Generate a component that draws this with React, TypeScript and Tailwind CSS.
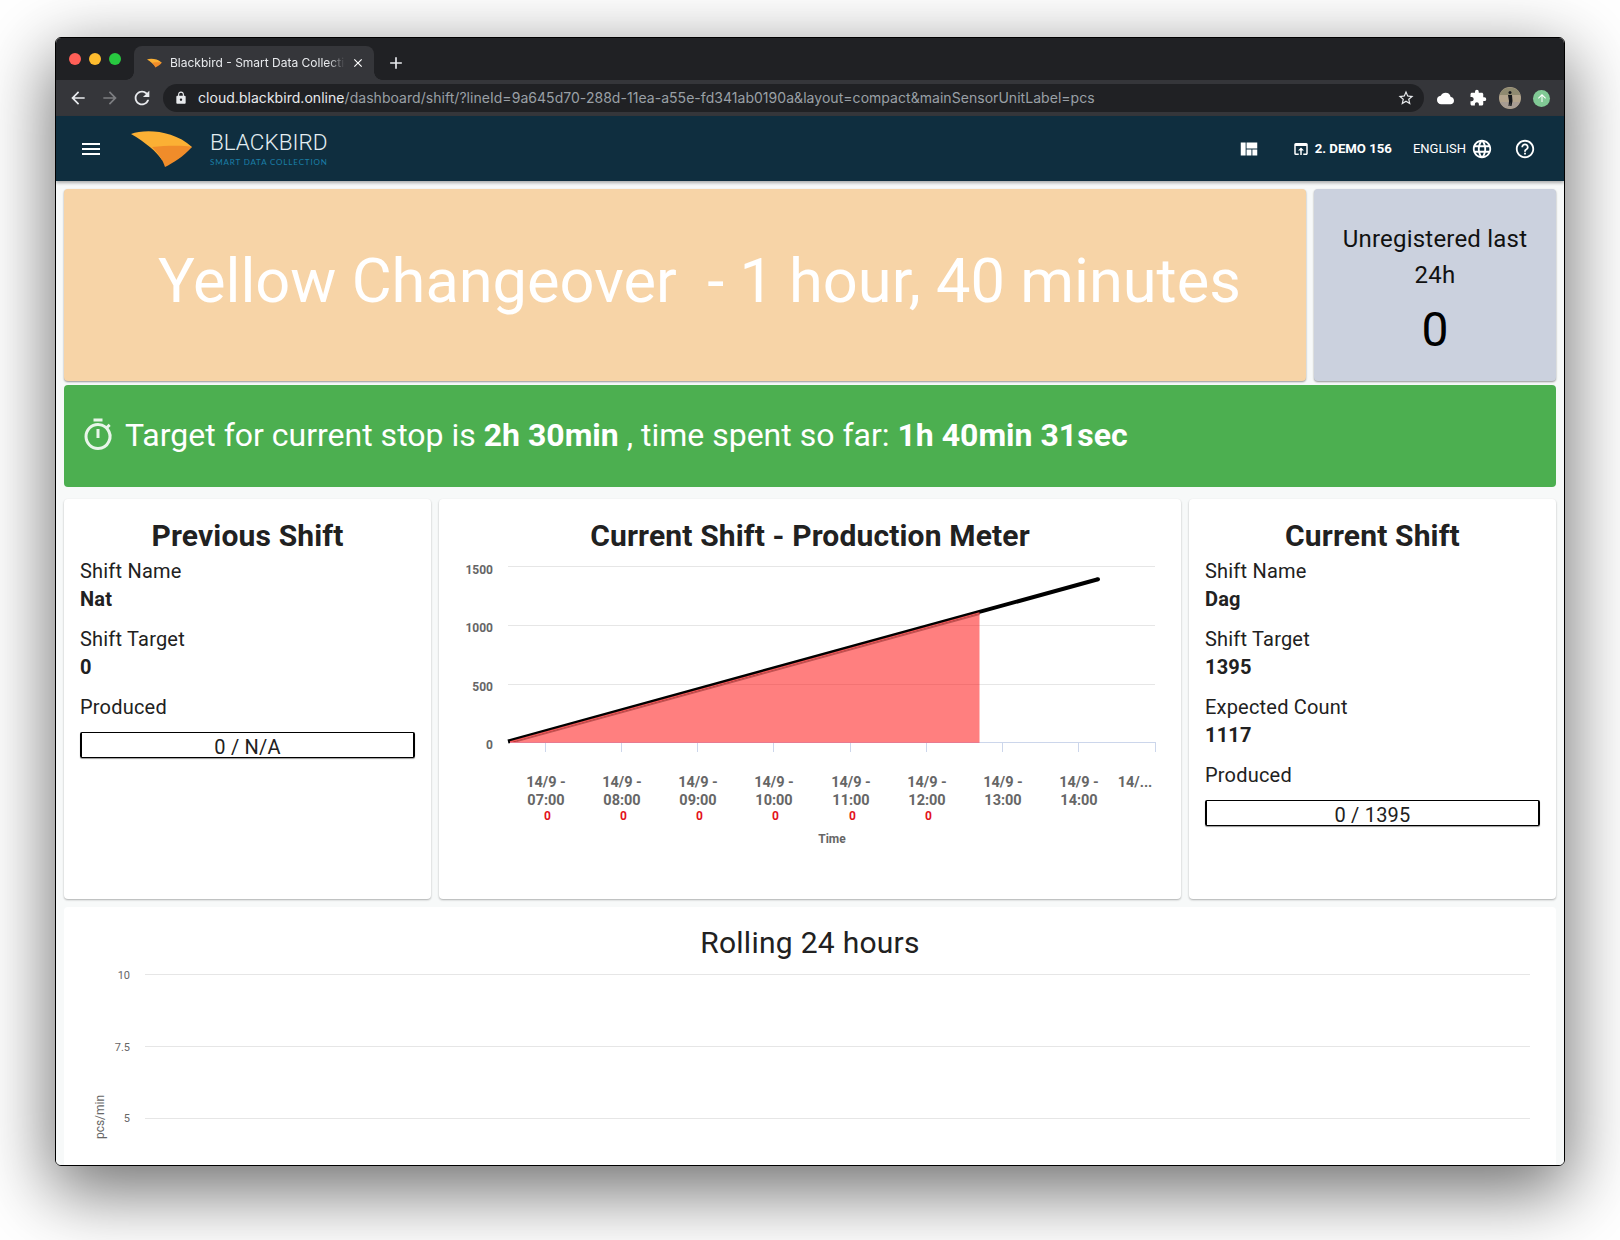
import React from 'react';
import {
  MdArrowBack, MdArrowForward, MdRefresh, MdLock, MdStarBorder, MdExtension, MdCloud, MdMenu,
  MdViewQuilt, MdOpenInBrowser, MdLanguage, MdHelpOutline, MdOutlineTimer, MdClose, MdAdd, MdArrowUpward,
} from 'react-icons/md';

const hours = ['07:00', '08:00', '09:00', '10:00', '11:00', '12:00', '13:00', '14:00'];
const ticks = [545, 621, 697, 773, 850, 926, 1002, 1078, 1155];

const BirdLogo = ({ className }: { className: string }) => (
  <svg viewBox="0 0 62 37" className={className}>
    <path d="M0 4 C14 -1 42 0 61 17 L31 30 C26 22 14 12 0 4Z" fill="#fbb034" />
    <path d="M21 17 C34 16 50 15 61 17 C52 27 42 33 34 37 C32 30 27 23 21 17Z" fill="#f08c2a" />
  </svg>
);

const ProgressBar = ({ label }: { label: string }) => (
  <div className="mt-[11px] flex h-[26px] items-center justify-center rounded-[2px] border border-x-2 border-black pt-[4px] text-[20px] leading-none tracking-[0.2px] text-[#212121] shadow-[0_1px_1px_rgba(0,0,0,0.4)]">
    {label}
  </div>
);

const Stat = ({ label, value }: { label: string; value: string }) => (
  <div className="mb-3 text-[20px] leading-[28px] tracking-[0.2px] text-[#212121]">
    <div>{label}</div>
    <div className="font-bold">{value}</div>
  </div>
);

const ShiftCard = ({ title, stats, bar, className }: { title: string; stats: string[][]; bar: string; className: string }) => (
  <div className={`rounded-[4px] bg-white px-4 pt-[19px] shadow-[0_1px_2px_rgba(0,0,0,0.3)] ${className}`}>
    <h2 className="mb-[3px] text-center text-[30px] leading-[36px] font-bold tracking-[0.15px] text-[#212121]">{title}</h2>
    {stats.map(s => <Stat key={s[0]} label={s[0]} value={s[1]} />)}
    <div className="text-[20px] leading-[28px] tracking-[0.2px] text-[#212121]">Produced</div>
    <ProgressBar label={bar} />
  </div>
);

const ProductionChart = () => (
  <svg viewBox="439 554 742 345" className="block h-[345px] w-[742px]">
    {[566.5, 625.5, 684.5].map(y => <line key={y} x1="508" x2="1155" y1={y} y2={y} stroke="#e6e6e6" />)}
    <line x1="508" x2="1155" y1="742.5" y2="742.5" stroke="#ccd6eb" />
    {ticks.map(x => <line key={x} x1={x + 0.5} x2={x + 0.5} y1="742" y2="752" stroke="#ccd6eb" />)}
    {[['1500', 570], ['1000', 628], ['500', 687], ['0', 745]].map(([t, y]) => (
      <text key={t} x="493" y={Number(y) + 4} textAnchor="end" className="fill-[#666666] text-[12px] font-bold">{t}</text>
    ))}
    <line x1="508" y1="741.5" x2="1098" y2="579.3" stroke="#000" strokeWidth="4" />
    <circle cx="1098" cy="579.3" r="2" fill="#000" />
    <path d="M510 742 L979.5 612.9 L979.5 742 Z" fill="#ff0000" fillOpacity="0.5" />
    <path d="M510 742 L979.5 612.9" stroke="#f05858" strokeWidth="1.3" fill="none" />
    <path d="M516 741.6 L979.5 614.2" stroke="#c25252" strokeWidth="1.5" fill="none" />
    <path d="M510 742.5 L979.5 742.5" stroke="#e87a90" fill="none" />
    {hours.map((h, i) => (
      <g key={h} className="fill-[#666666] text-[14.5px] font-bold" textAnchor="middle">
        <text x={ticks[i] + 1} y="787">14/9 -</text>
        <text x={ticks[i] + 1} y="805">{h}</text>
        {i < 6 && <text x={ticks[i] + 2.5} y="820" className="fill-[#e3131b] text-[12px]">0</text>}
      </g>
    ))}
    <text x="1135" y="787" textAnchor="middle" className="fill-[#666666] text-[14.5px] font-bold">14/...</text>
    <text x="832" y="843" textAnchor="middle" className="fill-[#666666] text-[12px] font-bold">Time</text>
  </svg>
);

const RollingChart = () => (
  <svg viewBox="64 961 1492 205" className="block h-[205px] w-[1492px]">
    {[[974.5, '10', 979], [1046.5, '7.5', 1051], [1118.5, '5', 1121.5]].map(([y, t, ty]) => (
      <g key={String(t)}>
        <line x1="145" x2="1530" y1={y} y2={y} stroke="#e6e6e6" />
        <text x="130" y={ty} textAnchor="end" className="fill-[#666666] text-[11px]">{t}</text>
      </g>
    ))}
    <text transform="translate(104 1117) rotate(-90)" textAnchor="middle" className="fill-[#666666] text-[12px]">pcs/min</text>
  </svg>
);

export default function App() {
  return (
    <div className="h-[1240px] overflow-hidden bg-white pt-[37px] pl-[55px] font-['Roboto',sans-serif]">
      <div className="flex h-[1129px] w-[1510px] flex-col overflow-hidden rounded-[6px] border border-black shadow-[0_22px_70px_4px_rgba(0,0,0,0.56)]">
        {/* tab strip */}
        <div className="flex h-[42px] shrink-0 bg-[#202124] pt-[8px]">
          <div className="ml-[13px] flex w-[59px] gap-2 pt-[7px]">
            <span className="size-3 rounded-full bg-[#ff5f57]" />
            <span className="size-3 rounded-full bg-[#febc2e]" />
            <span className="size-3 rounded-full bg-[#28c840]" />
          </div>
          <div className="relative ml-[6px] flex h-[34px] w-[240px] items-center rounded-t-[8px] bg-[#35363a] pl-[13px] text-[12px] text-[#e8eaed]">
            <span className="absolute bottom-0 -left-[8px] size-[8px] bg-[radial-gradient(circle_at_0_0,transparent_7.5px,#35363a_8px)]" />
            <span className="absolute -right-[8px] bottom-0 size-[8px] bg-[radial-gradient(circle_at_100%_0,transparent_7.5px,#35363a_8px)]" />
            <BirdLogo className="h-[10px] w-[15px] shrink-0" />
            <span className="ml-[8px] w-[175px] overflow-hidden font-['Inter',sans-serif] whitespace-nowrap [mask-image:linear-gradient(90deg,#000_90%,transparent)]">Blackbird - Smart Data Collection</span>
            <MdClose className="ml-[6px] size-[14px] text-white" />
          </div>
          <MdAdd className="mt-[7px] ml-[12px] size-[20px] text-[#e8eaed]" />
        </div>
        {/* address bar */}
        <div className="flex h-[36px] shrink-0 items-center bg-[#35363a] pl-[12px] text-[#e8eaed]">
          <MdArrowBack className="size-[20px]" />
          <MdArrowForward className="ml-[12px] size-[20px] text-[#7c7d80]" />
          <MdRefresh className="ml-[11px] size-[22px]" />
          <div className="ml-[10px] flex h-[28px] w-[1261px] items-center rounded-full bg-[#202124] pl-[11px]">
            <MdLock className="size-[14px]" />
            <span className="mb-[2px] ml-[10px] font-['Inter',sans-serif] text-[14px] tracking-[0.04px] whitespace-nowrap">
              cloud.blackbird.online<span className="text-[#9aa0a6]">/dashboard/shift/?lineId=9a645d70-288d-11ea-a55e-fd341ab0190a&amp;layout=compact&amp;mainSensorUnitLabel=pcs</span>
            </span>
            <MdStarBorder className="mr-[9px] ml-auto size-[18px]" />
          </div>
          <MdCloud className="ml-[13px] size-[17px] text-white" />
          <MdExtension className="ml-[15px] size-[18px] text-white" />
          <svg viewBox="0 0 22 22" className="ml-[12px] size-[22px]">
            <circle cx="11" cy="11" r="11" fill="#b3a48c" />
            <path d="M0.6 8 H21.4 A11 11 0 0 0 0.6 8Z" fill="#8f8a70" />
            <path d="M1 15 H21 A11 11 0 0 1 1 15Z" fill="#a79c92" />
            <circle cx="11" cy="5.5" r="1.5" fill="#15181c" />
            <path d="M9 8 H13 L13.5 14 L12.5 19 H11.2 V15 L10.5 19 H9.5 L10 14Z" fill="#15181c" />
          </svg>
          <div className="ml-[12px] flex size-[17px] items-center justify-center rounded-full bg-[#81c995]">
            <MdArrowUpward className="size-[12px] text-white" />
          </div>
        </div>
        {/* app bar */}
        <div className="z-10 flex h-[65px] shrink-0 items-center bg-[#0f2e3f] pr-[28px] pl-[23px] text-white shadow-[0_2px_3px_rgba(0,0,0,0.3)]">
          <MdMenu className="size-[24px]" />
          <BirdLogo className="ml-[28px] h-[37px] w-[62px]" />
          <div className="ml-[17px] flex flex-col">
            <span className="text-[22.5px] leading-[24px] font-light text-[#e4eef2]">BLACKBIRD</span>
            <span className="mt-[3px] font-['Lato',sans-serif] text-[8px] leading-[10px] tracking-[0.85px] whitespace-nowrap text-[#1a7fa8]">SMART DATA COLLECTION</span>
          </div>
          <MdViewQuilt className="ml-auto size-[22px]" />
          <MdOpenInBrowser className="ml-[32px] size-[18px]" />
          <span className="ml-[5px] text-[13.2px] font-bold">2. DEMO 156</span>
          <span className="ml-[21px] text-[13px]">ENGLISH</span>
          <MdLanguage className="ml-[5px] size-[22px]" />
          <MdHelpOutline className="ml-[21px] size-[22px]" />
        </div>
        {/* dashboard */}
        <div className="flex min-h-0 flex-1 flex-col bg-[#f7f9f9] px-[8px] pt-[8px]">
          <div className="flex h-[192px] shrink-0 gap-2">
            <div className="flex flex-1 items-center justify-center rounded-[4px] bg-[#f7d4a7] pb-[8px] pl-[29px] text-[61.35px] whitespace-pre text-white shadow-[0_1px_2px_rgba(0,0,0,0.4)]">
              Yellow Changeover  - 1 hour, 40 minutes
            </div>
            <div className="flex w-[242px] flex-col items-center rounded-[4px] bg-[#cbd1de] pt-[32px] text-center text-[24px] leading-[36px] tracking-[0.2px] text-[#111] shadow-[0_1px_2px_rgba(0,0,0,0.4)]">
              <div>Unregistered last</div>
              <div>24h</div>
              <div className="mt-[9px] text-[48px] leading-[56px] text-black">0</div>
            </div>
          </div>
          <div className="mt-1 flex h-[102px] shrink-0 items-center rounded-[4px] bg-[#4caf50] pb-[2px] pl-[16px] text-[32px] text-white">
            <MdOutlineTimer className="size-[36px] shrink-0 text-[#e9f5ea]" />
            <span className="ml-[9px]">Target for current stop is <b>2h 30min</b> , time spent so far: <b>1h 40min 31sec</b></span>
          </div>
          <div className="mt-3 flex h-[400px] shrink-0 gap-2">
            <ShiftCard
              title="Previous Shift"
              className="w-[367px]"
              stats={[['Shift Name', 'Nat'], ['Shift Target', '0']]}
              bar="0 / N/A"
            />
            <div className="w-[742px] rounded-[4px] bg-white pt-[19px] shadow-[0_1px_2px_rgba(0,0,0,0.3)]">
              <h2 className="text-center text-[30px] leading-[36px] font-bold tracking-[0.15px] text-[#212121]">Current Shift - Production Meter</h2>
              <ProductionChart />
            </div>
            <ShiftCard
              title="Current Shift"
              className="w-[367px]"
              stats={[['Shift Name', 'Dag'], ['Shift Target', '1395'], ['Expected Count', '1117']]}
              bar="0 / 1395"
            />
          </div>
          <div className="mt-2 flex-1 rounded-t-[4px] bg-white pt-[18px]">
            <h2 className="text-center text-[30px] leading-[36px] tracking-[0.27px] text-[#212121]">Rolling 24 hours</h2>
            <RollingChart />
          </div>
        </div>
      </div>
    </div>
  );
}
